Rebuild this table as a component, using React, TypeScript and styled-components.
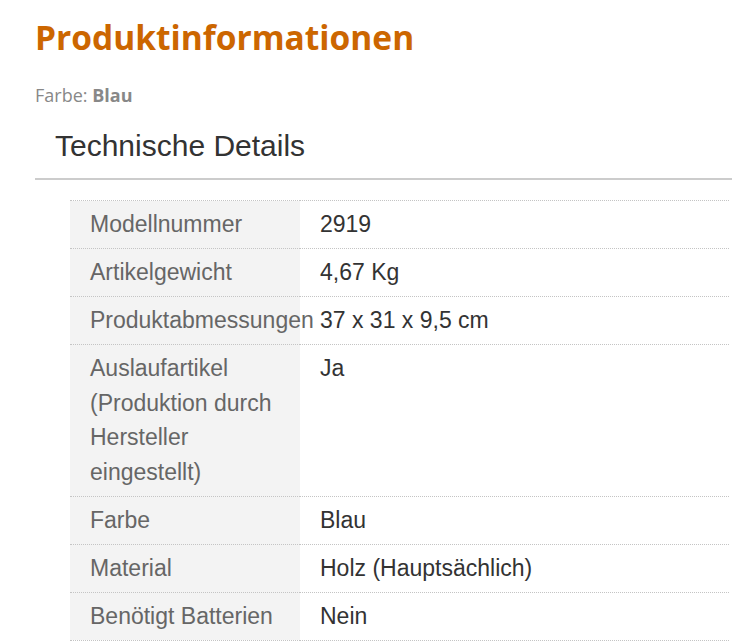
import styled, { createGlobalStyle } from 'styled-components'

const GlobalStyle = createGlobalStyle`
  html, body {
    margin: 0;
    padding: 0;
    background: #ffffff;
  }
`

const Page = styled.div`
  padding: 16px 10px 0 35px;
  font-family: 'Liberation Sans', Arial, sans-serif;
`
const Title = styled.h1`
  color: #cc6600;
  font-family: 'Open Sans', 'Noto Sans', sans-serif;
  font-size: 33.5px;
  font-weight: 700;
  line-height: 42px;
  margin: 0;
`
const Variant = styled.div`
  color: #888888;
  font-family: 'Open Sans', 'Noto Sans', sans-serif;
  font-size: 18px;
  line-height: 24px;
  margin-top: 25px;

  b {
    font-weight: 700;
  }
`
const SectionHeader = styled.h2`
  border-bottom: 2px solid #cccccc;
  color: #333333;
  font-size: 30px;
  font-weight: 400;
  line-height: 34px;
  margin: 22px 0 0;
  padding: 0 0 15px 20px;
`
const DetailsTable = styled.table`
  border-collapse: collapse;
  margin: 20px 0 0 35px;
  table-layout: fixed;
  width: 659px;
`
const Row = styled.tr`
  border-top: 1px dotted #c4c4c4;
  border-bottom: 1px dotted #c4c4c4;
`
const Cell = styled.td<{ $label?: boolean }>`
  background: ${p => (p.$label ? '#f3f3f3' : '#ffffff')};
  color: ${p => (p.$label ? '#666666' : '#333333')};
  font-size: 23px;
  line-height: 34.5px;
  padding: 6.25px ${p => (p.$label ? '10px' : '0')} 6.25px 20px;
  vertical-align: top;
  white-space: ${p => (p.$label ? 'normal' : 'nowrap')};
`

const details: [string, string][] = [
  ['Modellnummer', '2919'],
  ['Artikelgewicht', '4,67 Kg'],
  ['Produktabmessungen', '37 x 31 x 9,5 cm'],
  ['Auslaufartikel (Produktion durch Hersteller eingestellt)', 'Ja'],
  ['Farbe', 'Blau'],
  ['Material', 'Holz (Hauptsächlich)'],
  ['Benötigt Batterien', 'Nein'],
]

const App = () => {
  return (
    <Page>
      <GlobalStyle />
      <Title>Produktinformationen</Title>
      <Variant>
        Farbe: <b>Blau</b>
      </Variant>
      <SectionHeader>Technische Details</SectionHeader>
      <DetailsTable>
        <colgroup>
          <col style={{ width: 230 }} />
          <col />
        </colgroup>
        <tbody>
          {details.map(([label, value]) => (
            <Row key={label}>
              <Cell $label>{label}</Cell>
              <Cell>{value}</Cell>
            </Row>
          ))}
        </tbody>
      </DetailsTable>
    </Page>
  )
}

export default App
